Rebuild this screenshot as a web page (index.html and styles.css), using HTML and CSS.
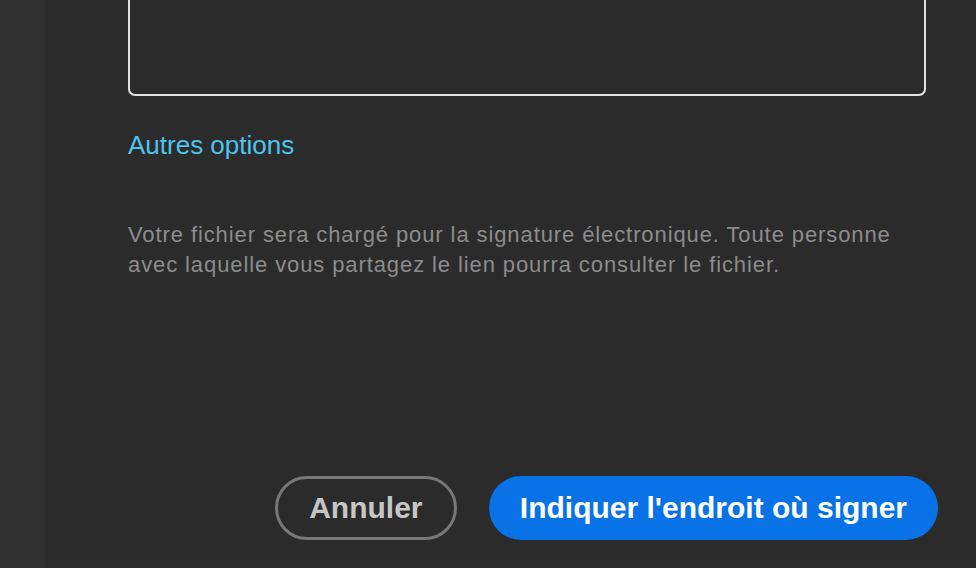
FILE: index.html
```html
<!DOCTYPE html>
<html lang="fr">
<head>
  <meta charset="UTF-8">
  <title>Signature électronique</title>
  <link rel="stylesheet" href="styles.css">
</head>
<body>
  <div class="layout">
    <div class="rail"></div>
    <main class="panel">
      <div class="content">
        <div class="message-box"></div>
        <a class="more-link" href="#">Autres options</a>
        <p class="notice">Votre fichier sera chargé pour la signature électronique. Toute personne avec laquelle vous partagez le lien pourra consulter le fichier.</p>
      </div>
      <div class="actions">
        <button class="btn btn-secondary">Annuler</button>
        <button class="btn btn-primary">Indiquer l'endroit où signer</button>
      </div>
    </main>
  </div>
</body>
</html>
```

FILE: styles.css
```css
body {
  margin: 0;
  background: #2b2b2b;
  font-family: 'Liberation Sans', Arial, Helvetica, sans-serif;
  overflow: hidden;
}

.layout {
  display: flex;
  height: 568px;
}

.rail {
  width: 45px;
  flex-shrink: 0;
  background: #303030;
}

.panel {
  flex: 1;
  display: flex;
  flex-direction: column;
  padding: 0 38px 0 83px;
}

.content {
  margin-right: 12px;
  display: flex;
  flex-direction: column;
  align-items: flex-start;
}

.message-box {
  box-sizing: border-box;
  align-self: stretch;
  height: 200px;
  margin-top: -104px;
  border: 2px solid #e4e4e4;
  border-radius: 7px;
}

.more-link {
  margin-top: 34px;
  font-size: 26px;
  line-height: 30px;
  color: #4dc4f0;
  text-decoration: none;
}

.notice {
  margin: 60px 0 0;
  font-size: 22px;
  line-height: 30px;
  letter-spacing: 0.9px;
  color: #8c8c8c;
}

.actions {
  margin-top: auto;
  margin-bottom: 28px;
  display: flex;
  justify-content: flex-end;
  gap: 32px;
}

.btn {
  height: 64px;
  border-radius: 32px;
  font-family: inherit;
  font-size: 30px;
  font-weight: bold;
  cursor: pointer;
}

.btn-secondary {
  width: 182px;
  background: transparent;
  border: 3px solid #777777;
  color: #c6c6c6;
}

.btn-primary {
  padding: 0 31px;
  background: #0872e6;
  border: none;
  color: white;
}
```
